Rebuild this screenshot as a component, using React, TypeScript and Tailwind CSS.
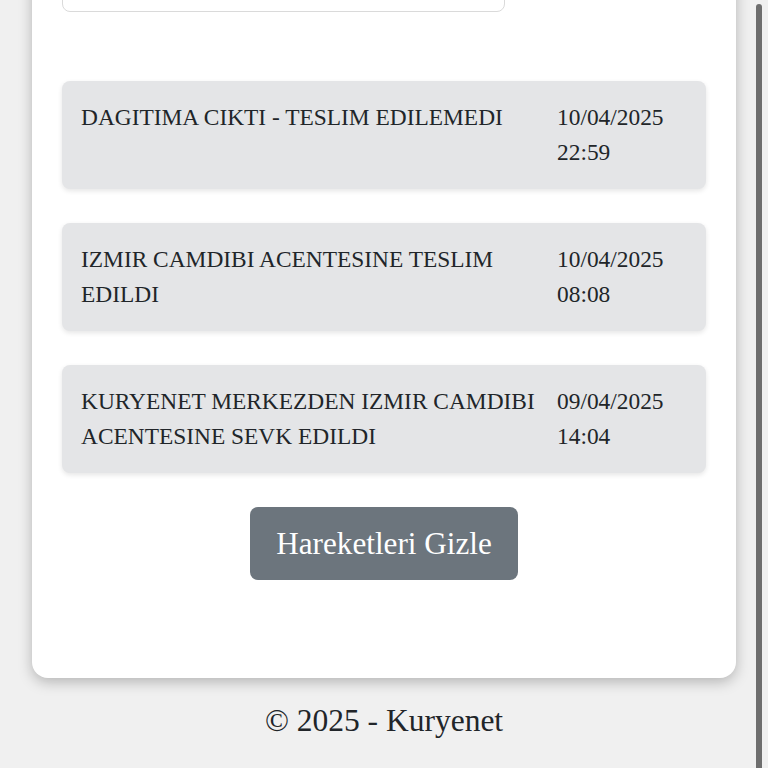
import React from "react";

const items = [
  { text: "DAGITIMA CIKTI - TESLIM EDILEMEDI", date: "10/04/2025", time: "22:59" },
  { text: "IZMIR CAMDIBI ACENTESINE TESLIM EDILDI", date: "10/04/2025", time: "08:08" },
  { text: "KURYENET MERKEZDEN IZMIR CAMDIBI ACENTESINE SEVK EDILDI", date: "09/04/2025", time: "14:04" },
];

export default function App() {
  return (
    <div
      className="min-h-screen bg-[#f0f0f0] overflow-hidden text-[#212529]"
      style={{ fontFamily: '"Liberation Serif", "Times New Roman", serif' }}
    >
      <div className="mx-[32px] mt-[-60px] rounded-[16px] bg-white shadow-[0_4px_14px_rgba(0,0,0,0.25)] px-[30px] pt-[30px] pb-[98px]">
        <div className="h-[42px] w-[443px] rounded-[8px] border border-[#dadada] bg-white" />
        <div className="mt-[69px] flex flex-col gap-[34px]">
          {items.map((it, i) => (
            <div
              key={i}
              className="flex rounded-[8px] bg-[#e4e5e7] p-[19px] text-[23.4px] leading-[35px] shadow-[0_2px_5px_rgba(0,0,0,0.1)]"
            >
              <div className="flex-1 pr-[10px]">{it.text}</div>
              <div className="w-[130px] shrink-0">
                <div>{it.date}</div>
                <div>{it.time}</div>
              </div>
            </div>
          ))}
        </div>
        <div className="mt-[34px] flex justify-center">
          <button className="rounded-[8px] bg-[#6c757d] px-[26px] py-[13px] text-[31.2px] leading-[47px] text-white">
            Hareketleri Gizle
          </button>
        </div>
      </div>
      <div className="mt-[19px] text-center text-[31.5px] leading-[47px]">© 2025 - Kuryenet</div>
      <div className="fixed right-[6px] top-[4px] bottom-0 w-[6px] rounded-t-full bg-[#6e6e6e]" />
    </div>
  );
}
